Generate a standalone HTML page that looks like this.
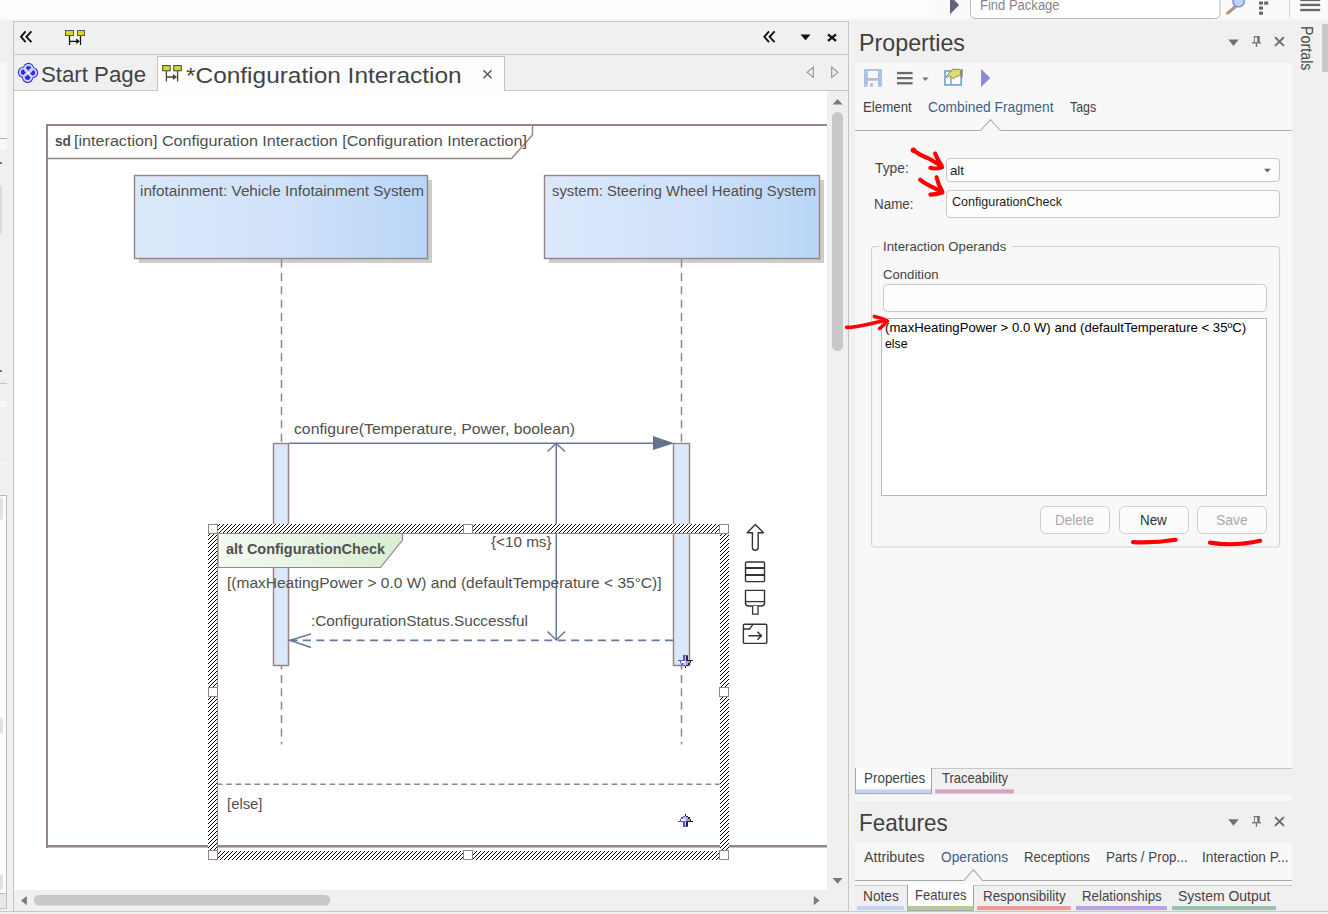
<!DOCTYPE html>
<html><head><meta charset="utf-8"><title>Configuration Interaction</title>
<style>
html,body{margin:0;padding:0}
body{width:1328px;height:914px;overflow:hidden;background:#f0f0f0;position:relative;font-family:"Liberation Sans",sans-serif}
.a{position:absolute}
.t{position:absolute;white-space:nowrap;line-height:1;transform-origin:0 50%;font-family:"Liberation Sans",sans-serif}
svg{position:absolute;left:0;top:0;overflow:visible}
</style></head><body>
<div class="a" style="left:0px;top:0px;width:1328px;height:21px;background:#fdfdfd;background:linear-gradient(#fdfdfd 0,#fdfdfd 17px,#fbfbfb 18px,#f8f8f8 19px,#f5f5f5 20px,#f2f2f2 21px);"></div>
<div class="a" style="left:935px;top:0px;width:393px;height:21px;background:#f9f9f9;background:linear-gradient(#fafafa 0,#fafafa 17px,#f7f7f7 19px,#f2f2f2 21px);"></div>
<div class="a" style="left:0px;top:21px;width:13px;height:893px;background:#f0f0f0;"></div>
<div class="a" style="left:13px;top:21px;width:836px;height:891px;background:#f0f0f0;border-left:1px solid #c4c4c4;border-top:1px solid #c4c4c4;border-right:1px solid #c4c4c4;box-sizing:border-box;"></div>
<div class="a" style="left:14px;top:54px;width:834px;height:1px;background:#c8c8c8;"></div>
<div class="a" style="left:14px;top:90px;width:834px;height:1px;background:#c8c8c8;"></div>
<div class="a" style="left:14px;top:91px;width:813px;height:799px;background:#ffffff;"></div>
<div class="a" style="left:157px;top:56px;width:348px;height:35px;background:#fdfdfd;border:1px solid #c4c4c4;border-bottom:none;box-sizing:border-box;"></div>
<div class="a" style="left:849px;top:21px;width:6px;height:891px;background:#f1f1f1;"></div>
<div class="a" style="left:855px;top:21px;width:437px;height:42px;background:#f0f0f0;"></div>
<div class="a" style="left:855px;top:63px;width:437px;height:705px;background:#f8f8f8;"></div>
<div class="a" style="left:855px;top:768px;width:437px;height:1px;background:#c8c8c8;"></div>
<div class="a" style="left:855px;top:769px;width:437px;height:26px;background:#f0f0f0;"></div>
<div class="a" style="left:855px;top:795px;width:437px;height:6px;background:#f8f8f8;"></div>
<div class="a" style="left:855px;top:801px;width:437px;height:42px;background:#f0f0f0;"></div>
<div class="a" style="left:855px;top:843px;width:437px;height:37px;background:#f8f8f8;"></div>
<div class="a" style="left:855px;top:881px;width:437px;height:4px;background:#f8f8f8;"></div>
<div class="a" style="left:855px;top:885px;width:437px;height:1px;background:#c8c8c8;"></div>
<div class="a" style="left:855px;top:886px;width:437px;height:25px;background:#f0f0f0;"></div>
<div class="a" style="left:0px;top:911px;width:1328px;height:1px;background:#c8c8c8;"></div>
<div class="a" style="left:0px;top:912px;width:1328px;height:2px;background:#f0f0f0;"></div>
<svg width="1328" height="914" viewBox="0 0 1328 914" style="clip-path:inset(91px 501px 24px 14px)">
<defs>
<linearGradient id="gb" x1="0" y1="0" x2="1" y2="0"><stop offset="0" stop-color="#dbe8fb"/><stop offset="0.55" stop-color="#cfe1f9"/><stop offset="1" stop-color="#b9d6f7"/></linearGradient>
<linearGradient id="gg" x1="0" y1="0" x2="1" y2="0"><stop offset="0" stop-color="#f3f9f0"/><stop offset="1" stop-color="#d9eed2"/></linearGradient>
<pattern id="hatch" x="0" y="0" width="4" height="4" patternUnits="userSpaceOnUse" shape-rendering="crispEdges"><rect width="4" height="4" fill="#fff"/><rect x="3" y="0" width="1" height="1" fill="#000"/><rect x="2" y="1" width="1" height="1" fill="#000"/><rect x="1" y="2" width="1" height="1" fill="#000"/><rect x="0" y="3" width="1" height="1" fill="#000"/></pattern>
</defs>
<path d="M47,848 V125 H830" fill="none" stroke="#988484" stroke-width="2"/>
<path d="M46,846.25 H830" fill="none" stroke="#988484" stroke-width="2.5"/>
<path d="M48,158.5 H511.5 L532.5,135 V126" fill="none" stroke="#988484" stroke-width="1.4"/>
<rect x="139.0" y="180" width="293.0" height="83" fill="#cdcdcd"/>
<rect x="134.5" y="175.5" width="293.0" height="83" fill="url(#gb)" stroke="#988484" stroke-width="1.4"/>
<rect x="549.0" y="180" width="275.0" height="83" fill="#cdcdcd"/>
<rect x="544.5" y="175.5" width="275.0" height="83" fill="url(#gb)" stroke="#988484" stroke-width="1.4"/>
<path d="M281.5,259.5 V744.6" stroke="#988484" stroke-width="1.5" stroke-dasharray="8 5.4" fill="none"/>
<path d="M681.5,259.5 V744.6" stroke="#988484" stroke-width="1.5" stroke-dasharray="8 5.4" fill="none"/>
<rect x="273.5" y="443.5" width="15.0" height="222" fill="#dbe8fb" stroke="#988484" stroke-width="1.45"/>
<rect x="673.5" y="443.5" width="16.0" height="222" fill="#dbe8fb" stroke="#988484" stroke-width="1.45"/>
<path d="M289,443.25 H655" stroke="#68779a" stroke-width="1.6" fill="none"/>
<path d="M653,436 L674.2,443.2 L653,450 Z" fill="#65728f"/>
<path d="M556.25,444 V640" stroke="#68779a" stroke-width="1.5" fill="none"/>
<path d="M547.5,451.5 L556.25,443.5 L565,451.5 M547.5,631.5 L556.25,640 L565,631.5" stroke="#68779a" stroke-width="1.5" fill="none"/>
<path d="M673,640.35 H289" stroke="#68779a" stroke-width="1.6" stroke-dasharray="8 5.41" fill="none"/>
<path d="M311,634 L290,640.25 L311,647.5" stroke="#68779a" stroke-width="1.5" fill="none"/>
<path d="M217.5,851 V533.5 H720" fill="none" stroke="#988484" stroke-width="1"/>
<path d="M218,533.5 H402.5 V540 L380.5,567.5 H218 Z" fill="url(#gg)" stroke="#988484" stroke-width="1.2"/>
<path d="M216.8,784.3 H719.5" stroke="#988484" stroke-width="1.5" stroke-dasharray="5.7 3.7" fill="none"/>
<path d="M208,524 H729 V860 H208 Z M217,533 V851 H720 V533 Z" fill="url(#hatch)" fill-rule="evenodd" shape-rendering="crispEdges"/>
<rect x="208.5" y="524.5" width="9" height="9" fill="#fff" stroke="#988484" stroke-width="1"/>
<rect x="463.5" y="524.5" width="9" height="9" fill="#fff" stroke="#988484" stroke-width="1"/>
<rect x="719.5" y="524.5" width="9" height="9" fill="#fff" stroke="#988484" stroke-width="1"/>
<rect x="208.5" y="687.5" width="9" height="9" fill="#fff" stroke="#988484" stroke-width="1"/>
<rect x="719.5" y="687.5" width="9" height="9" fill="#fff" stroke="#988484" stroke-width="1"/>
<rect x="208.5" y="850.5" width="9" height="9" fill="#fff" stroke="#988484" stroke-width="1"/>
<rect x="463.5" y="850.5" width="9" height="9" fill="#fff" stroke="#988484" stroke-width="1"/>
<rect x="719.5" y="850.5" width="9" height="9" fill="#fff" stroke="#988484" stroke-width="1"/>
</svg>
<svg width="1328" height="914" viewBox="0 0 1328 914">
<path d="M950,-4.2 V14.2 L959.2,5 Z" fill="#62627c"/>
<rect x="970.5" y="-6" width="249.5" height="24.5" rx="4.5" fill="#fff" stroke="#b8b8b8" stroke-width="1"/>
<path d="M1235.5,6.2 L1227.3,13.2" stroke="#b89a6a" stroke-width="2.8" stroke-linecap="round"/>
<path d="M1236.3,7.2 L1228.3,14" stroke="#8c7ec8" stroke-width="1" stroke-linecap="round"/>
<circle cx="1238.6" cy="1.2" r="5.6" fill="#c4d4f4" stroke="#7c8ce4" stroke-width="1.5"/>
<rect x="1259" y="1.5" width="4" height="3.2" fill="#6a6a6a"/>
<rect x="1264.2" y="1.5" width="4" height="3.2" fill="#6a6a6a"/>
<rect x="1259" y="6.5" width="4" height="3.2" fill="#6a6a6a"/>
<rect x="1259" y="11.6" width="4" height="3.2" fill="#6a6a6a"/>
<rect x="1289" y="0" width="1" height="18" fill="#d4d4d4"/>
<rect x="1300.2" y="-1.2" width="20" height="2.3" fill="#686868"/>
<rect x="1300.2" y="3.8" width="20" height="2.3" fill="#686868"/>
<rect x="1300.2" y="8.9" width="20" height="2.3" fill="#686868"/>
<path d="M25.6,31.4 L21,36.8 L25.6,42.2 M31.4,31.4 L26.4,36.8 L31.4,42.2" fill="none" stroke="#111" stroke-width="1.9"/>
<g transform="translate(65,30) scale(1.0)"><rect x="0.5" y="0.5" width="8" height="5" fill="#d6d61c" stroke="#5a5a5a" stroke-width="1"/><rect x="12.5" y="0.5" width="7" height="5" fill="#d6d61c" stroke="#5a5a5a" stroke-width="1"/><path d="M4.5,6 V15 M15.5,6 V15 M5,11.3 H13" stroke="#111" stroke-width="1.2" fill="none"/><path d="M11.2,8.6 L14.8,11.3 L11.2,14 Z" fill="#111"/></g>
<g transform="translate(162.1,65)"><rect x="0.55" y="0.55" width="7.5" height="5.2" fill="#d2d642" stroke="#56562e" stroke-width="1.1"/><rect x="11.65" y="0.55" width="7.5" height="5.2" fill="#d2d642" stroke="#56562e" stroke-width="1.1"/><path d="M4.3,6 V16.4 M15.5,6 V16.4 M4.6,12 H12" stroke="#48482e" stroke-width="1.3" fill="none"/><path d="M10.8,9 L15,12 L10.8,15 Z" fill="#48482e"/></g>
<path d="M769,31.4 L764.3,36.8 L769,42.2 M774.6,31.4 L769.6,36.8 L774.6,42.2" fill="none" stroke="#111" stroke-width="1.9"/>
<path d="M800.5,34.5 H810.5 L805.5,40.3 Z" fill="#111"/>
<path d="M828,34.3 L836,40.8 M836,34.3 L828,40.8" stroke="#111" stroke-width="2.3"/>
<path d="M483.5,70.2 L491.5,78.2 M491.5,70.2 L483.5,78.2" stroke="#555" stroke-width="1.5"/>
<path d="M813.3,67.2 V77.4 L807.2,72.3 Z" fill="none" stroke="#909090" stroke-width="1.1"/>
<path d="M831.7,67.2 V77.4 L837.8,72.3 Z" fill="none" stroke="#909090" stroke-width="1.1"/>
<circle cx="28.5" cy="68.3" r="5.5" fill="#2c2ce4"/>
<circle cx="32.7" cy="72.7" r="5.5" fill="#2c2ce4"/>
<circle cx="27.6" cy="77.5" r="5.5" fill="#2c2ce4"/>
<circle cx="23.3" cy="72.3" r="5.5" fill="#2c2ce4"/>
<circle cx="28" cy="72.8" r="5" fill="#2c2ce4"/>
<circle cx="28.5" cy="68.6" r="3.7" fill="none" stroke="#d2d2f9" stroke-width="2"/>
<circle cx="32.4" cy="72.7" r="3.7" fill="none" stroke="#d2d2f9" stroke-width="2"/>
<circle cx="27.6" cy="77.2" r="3.7" fill="none" stroke="#d2d2f9" stroke-width="2"/>
<circle cx="23.6" cy="72.3" r="3.7" fill="none" stroke="#d2d2f9" stroke-width="2"/>
<circle cx="28" cy="72.9" r="1.1" fill="#fff"/>
<path d="M832.6,104.6 H842.6 L837.6,98.9 Z" fill="#7a7a7a"/>
<rect x="832" y="112" width="11" height="239" rx="5.5" fill="#c8c8c8"/>
<path d="M832.6,878 H842.6 L837.6,883.8 Z" fill="#7a7a7a"/>
<path d="M26.8,896 V905.2 L21,900.6 Z" fill="#7a7a7a"/>
<rect x="33.75" y="895" width="296.5" height="10.5" rx="5.25" fill="#c8c8c8"/>
<path d="M813.8,896 V905.2 L819.6,900.6 Z" fill="#7a7a7a"/>
</svg>
<svg width="1328" height="914" viewBox="0 0 1328 914">
<path d="M1228.3,39.4 H1238.7 L1233.5,45.9 Z" fill="#707070"/>
<rect x="1253.6" y="36.099999999999994" width="6.1" height="1.3" fill="#707070"/>
<rect x="1253.9" y="36.099999999999994" width="1.1" height="6.3" fill="#8a8a8a"/>
<rect x="1257.2" y="36.099999999999994" width="2.5" height="6.3" fill="#707070"/>
<rect x="1252" y="42.199999999999996" width="8.9" height="1.3" fill="#707070"/>
<rect x="1255.8" y="43.3" width="1.3" height="3.6" fill="#707070"/>
<path d="M1275.6,37.699999999999996 L1283.4,45.4 M1283.4,37.699999999999996 L1275.6,45.4" stroke="#707070" stroke-width="2" stroke-linecap="round"/>
<path d="M1228.3,819.3000000000001 H1238.7 L1233.5,825.8000000000001 Z" fill="#707070"/>
<rect x="1253.6" y="816.0" width="6.1" height="1.3" fill="#707070"/>
<rect x="1253.9" y="816.0" width="1.1" height="6.3" fill="#8a8a8a"/>
<rect x="1257.2" y="816.0" width="2.5" height="6.3" fill="#707070"/>
<rect x="1252" y="822.1" width="8.9" height="1.3" fill="#707070"/>
<rect x="1255.8" y="823.2" width="1.3" height="3.6" fill="#707070"/>
<path d="M1275.6,817.6 L1283.4,825.3000000000001 M1283.4,817.6 L1275.6,825.3000000000001" stroke="#707070" stroke-width="2" stroke-linecap="round"/>
<path d="M864,69.1 H881.9 V86.7 H878 V80.7 H867.8 V86.7 H864 Z M867.8,71 V78.1 H878 V71 Z" fill="#aac2df" fill-rule="evenodd"/>
<rect x="870.3" y="83.1" width="2.5" height="3.6" fill="#a9b9c6"/>
<rect x="897" y="71.9" width="15.6" height="2.3" fill="#6a6a6a"/>
<rect x="897" y="77.0" width="15.6" height="2.3" fill="#6a6a6a"/>
<rect x="897" y="82.1" width="15.6" height="2.3" fill="#6a6a6a"/>
<path d="M922.4,77.6 H928.4 L925.4,80.9 Z" fill="#707070"/>
<rect x="945" y="71" width="16.2" height="13.9" fill="#fdfdfd" stroke="#6e9ed2" stroke-width="1.6"/>
<path d="M950.9,71 V85" stroke="#6e9ed2" stroke-width="1.4" fill="none"/>
<path d="M946.2,77 L948.5,73.4 L952,70.4 L952.3,69.3 H959.2 L960.6,71 V74.6 L958.4,76.1 L956,76.6 L953.6,79 L951.4,77 L949,75.6 L947.2,77.6 Z" fill="#dcdc6e" stroke="#86863c" stroke-width="0.9" stroke-linejoin="round"/>
<rect x="960.6" y="69" width="2.1" height="8.7" fill="#8a8a8a"/>
<path d="M981.1,69 V87.1 L990.3,77.9 Z" fill="#8a88dc"/>
<path d="M855,130.5 H980.5 L990.5,119.6 L1000.3,130.5 H1292" fill="none" stroke="#b0b0b0" stroke-width="1.1"/>
<path d="M855,880.5 H963.8 L973.4,869.6 L982.6,880.5 H1292" fill="#f8f8f8" stroke="#a8a8a8" stroke-width="1.1"/>
<rect x="946.5" y="158.5" width="333" height="23" rx="3.5" fill="#fdfdfd" stroke="#c6c6c6"/>
<path d="M1264,168.8 H1270.8 L1267.4,172.6 Z" fill="#666"/>
<rect x="946.5" y="190.5" width="333" height="27" rx="3.5" fill="#fdfdfd" stroke="#c6c6c6"/>
<path d="M879.5,246.5 H875 Q871.5,246.5 871.5,250 V543.5 Q871.5,547 875,547 H1276 Q1279.5,547 1279.5,543.5 V250 Q1279.5,246.5 1276,246.5 H1011.5" fill="none" stroke="#d2d2d2" stroke-width="1.1"/>
<rect x="883.5" y="284.5" width="383" height="27" rx="4" fill="#fdfdfd" stroke="#c8c8c8"/>
<rect x="881.5" y="318.5" width="385" height="177" fill="#ffffff" stroke="#b9b9b9"/>
<rect x="1040.5" y="506.5" width="69" height="27" rx="5" fill="#fbfbfb" stroke="#cdcdcd"/>
<rect x="1119.5" y="506.5" width="69" height="27" rx="5" fill="#fbfbfb" stroke="#cdcdcd"/>
<rect x="1197.5" y="506.5" width="69" height="27" rx="5" fill="#fbfbfb" stroke="#cdcdcd"/>
<rect x="856" y="767.6" width="75" height="26" fill="#fdfdfd"/>
<path d="M855.5,768 V793.5 H931.5 V768" fill="none" stroke="#a6a6a6"/>
<rect x="856" y="789.4" width="75" height="3.8" fill="#c3d3f1"/>
<rect x="935.2" y="789.4" width="78.6" height="4" fill="#d5a3bf"/>
<rect x="857.2" y="906" width="46.8" height="4.2" fill="#c3d3f1"/>
<rect x="908" y="884.6" width="65" height="26" fill="#fdfdfd"/>
<path d="M907.5,885 V910.5 H973.5 V885" fill="none" stroke="#a6a6a6"/>
<rect x="908" y="906" width="65" height="4.2" fill="#b5c99c"/>
<rect x="977" y="906" width="93.8" height="4.2" fill="#f09a9a"/>
<rect x="1076" y="906" width="91" height="4.2" fill="#b8a2e2"/>
<rect x="1172" y="906" width="104" height="4.2" fill="#99c2b2"/>
<rect x="1322" y="24" width="6" height="48" fill="#c8c8c8"/>
<circle cx="913.4" cy="150.2" r="2.7" fill="#fe0000"/>
<path d="M913.4,150.2 C917,152.6 919,154 921.2,155.2 C924,156.6 927,157.6 929.6,159 C934,161.4 938,164 941.6,166.6 M935.2,153.6 C936.4,157 938.4,160.4 941.8,166.4 M930.4,167.8 C934,169 938,168.6 942,167.2" fill="none" stroke="#fe0000" stroke-width="4.2" stroke-linecap="round" stroke-linejoin="round"/>
<path d="M920.2,179.8 C923,182.4 926,184 929.4,185.6 C934,187.8 938,189.8 942.2,192 M936.6,177.4 C937.6,182 939.6,187 942.4,191.8 M930.4,194.6 C934.4,194.6 938.6,193.6 942.4,192.4" fill="none" stroke="#fe0000" stroke-width="4.2" stroke-linecap="round" stroke-linejoin="round"/>
<path d="M846.6,327.4 C856,327.6 868,324 884.6,320.6 M874.4,316.6 C880,317.6 884,319 887.4,321 C885,324 882.6,326.4 879.6,328.4" fill="none" stroke="#fe0000" stroke-width="3.6" stroke-linecap="round" stroke-linejoin="round"/>
<path d="M1133,542.2 C1147,542.8 1162,542 1175.6,539.8" fill="none" stroke="#fe0000" stroke-width="4.2" stroke-linecap="round"/>
<path d="M1210,542.6 C1224,545 1243,544.6 1260.2,540.8" fill="none" stroke="#fe0000" stroke-width="4.2" stroke-linecap="round"/>
</svg>
<svg width="1328" height="914" viewBox="0 0 1328 914">
<path d="M755.3,524.6 L763.5,532.7 H758.2 V547.6 Q758.2,550.3 755.3,550.3 Q752.4,550.3 752.4,547.6 V532.7 H747.2 Z" fill="#fff" stroke="#333" stroke-width="1.4" stroke-linejoin="round"/>
<rect x="745.5" y="562" width="19" height="19.6" rx="1.2" fill="#fff" stroke="#333" stroke-width="1.4"/>
<path d="M745.5,568 H764.5 M745.5,575 H764.5" stroke="#333" stroke-width="2"/>
<path d="M745.5,590.4 H764.5 V603 Q764.5,606 761.5,606 H748.5 Q745.5,606 745.5,603 Z" fill="#fff" stroke="#333" stroke-width="1.4" stroke-linejoin="round"/>
<path d="M745.5,601.6 H764.5" stroke="#333" stroke-width="1.3"/>
<path d="M752.6,606 V614.2 H758 V606" fill="#fff" stroke="#333" stroke-width="1.3"/>
<rect x="743.4" y="624.2" width="23.4" height="19.2" rx="1" fill="#fff" stroke="#333" stroke-width="1.4"/>
<path d="M743.4,629 H749.6 L753.2,624.2" fill="none" stroke="#333" stroke-width="1.3"/>
<path d="M748.4,635.8 H761 M757.4,631.8 L761.4,635.8 L757.4,639.8" fill="none" stroke="#333" stroke-width="1.5"/>
<g shape-rendering="crispEdges"><rect x="683" y="655" width="5" height="1" fill="#5454d4"/><rect x="683" y="656" width="2" height="1" fill="#5454d4"/><rect x="685" y="656" width="1" height="1" fill="#a8d0f4"/><rect x="686" y="656" width="2" height="1" fill="#262626"/><rect x="683" y="657" width="2" height="1" fill="#5454d4"/><rect x="685" y="657" width="1" height="1" fill="#a8d0f4"/><rect x="686" y="657" width="2" height="1" fill="#262626"/><rect x="683" y="658" width="2" height="1" fill="#5454d4"/><rect x="685" y="658" width="1" height="1" fill="#a8d0f4"/><rect x="686" y="658" width="2" height="1" fill="#262626"/><rect x="683" y="659" width="2" height="1" fill="#5454d4"/><rect x="685" y="659" width="1" height="1" fill="#a8d0f4"/><rect x="686" y="659" width="2" height="1" fill="#262626"/><rect x="678" y="660" width="7" height="1" fill="#5454d4"/><rect x="685" y="660" width="1" height="1" fill="#a8d0f4"/><rect x="686" y="660" width="7" height="1" fill="#262626"/><rect x="680" y="661" width="1" height="1" fill="#5454d4"/><rect x="681" y="661" width="4" height="1" fill="#ffffff"/><rect x="685" y="661" width="1" height="1" fill="#a8d0f4"/><rect x="686" y="661" width="4" height="1" fill="#a8a0e4"/><rect x="690" y="661" width="1" height="1" fill="#262626"/><rect x="680" y="662" width="1" height="1" fill="#5454d4"/><rect x="681" y="662" width="4" height="1" fill="#ffffff"/><rect x="685" y="662" width="1" height="1" fill="#a8d0f4"/><rect x="686" y="662" width="4" height="1" fill="#a8a0e4"/><rect x="690" y="662" width="1" height="1" fill="#262626"/><rect x="681" y="663" width="2" height="1" fill="#5454d4"/><rect x="683" y="663" width="3" height="1" fill="#a8d0f4"/><rect x="686" y="663" width="2" height="1" fill="#a8a0e4"/><rect x="688" y="663" width="2" height="1" fill="#262626"/><rect x="681" y="664" width="2" height="1" fill="#5454d4"/><rect x="683" y="664" width="3" height="1" fill="#a8d0f4"/><rect x="686" y="664" width="2" height="1" fill="#a8a0e4"/><rect x="688" y="664" width="2" height="1" fill="#262626"/><rect x="683" y="665" width="2" height="1" fill="#5454d4"/><rect x="685" y="665" width="1" height="1" fill="#a8d0f4"/><rect x="686" y="665" width="2" height="1" fill="#262626"/><rect x="685" y="666" width="1" height="1" fill="#111"/><rect x="685" y="667" width="1" height="1" fill="#111"/></g>
<g shape-rendering="crispEdges"><rect x="683" y="826" width="5" height="1" fill="#5454d4"/><rect x="683" y="825" width="2" height="1" fill="#5454d4"/><rect x="685" y="825" width="1" height="1" fill="#a8d0f4"/><rect x="686" y="825" width="2" height="1" fill="#262626"/><rect x="683" y="824" width="2" height="1" fill="#5454d4"/><rect x="685" y="824" width="1" height="1" fill="#a8d0f4"/><rect x="686" y="824" width="2" height="1" fill="#262626"/><rect x="683" y="823" width="2" height="1" fill="#5454d4"/><rect x="685" y="823" width="1" height="1" fill="#a8d0f4"/><rect x="686" y="823" width="2" height="1" fill="#262626"/><rect x="683" y="822" width="2" height="1" fill="#5454d4"/><rect x="685" y="822" width="1" height="1" fill="#a8d0f4"/><rect x="686" y="822" width="2" height="1" fill="#262626"/><rect x="678" y="821" width="7" height="1" fill="#5454d4"/><rect x="685" y="821" width="1" height="1" fill="#a8d0f4"/><rect x="686" y="821" width="7" height="1" fill="#262626"/><rect x="680" y="820" width="1" height="1" fill="#5454d4"/><rect x="681" y="820" width="4" height="1" fill="#ffffff"/><rect x="685" y="820" width="1" height="1" fill="#a8d0f4"/><rect x="686" y="820" width="4" height="1" fill="#a8a0e4"/><rect x="690" y="820" width="1" height="1" fill="#262626"/><rect x="680" y="819" width="1" height="1" fill="#5454d4"/><rect x="681" y="819" width="4" height="1" fill="#ffffff"/><rect x="685" y="819" width="1" height="1" fill="#a8d0f4"/><rect x="686" y="819" width="4" height="1" fill="#a8a0e4"/><rect x="690" y="819" width="1" height="1" fill="#262626"/><rect x="681" y="818" width="2" height="1" fill="#5454d4"/><rect x="683" y="818" width="3" height="1" fill="#a8d0f4"/><rect x="686" y="818" width="2" height="1" fill="#a8a0e4"/><rect x="688" y="818" width="2" height="1" fill="#262626"/><rect x="681" y="817" width="2" height="1" fill="#5454d4"/><rect x="683" y="817" width="3" height="1" fill="#a8d0f4"/><rect x="686" y="817" width="2" height="1" fill="#a8a0e4"/><rect x="688" y="817" width="2" height="1" fill="#262626"/><rect x="683" y="816" width="2" height="1" fill="#5454d4"/><rect x="685" y="816" width="1" height="1" fill="#a8d0f4"/><rect x="686" y="816" width="2" height="1" fill="#262626"/><rect x="685" y="815" width="1" height="1" fill="#111"/><rect x="685" y="814" width="1" height="1" fill="#111"/></g>
</svg>
<div class="a" style="left:0px;top:63px;width:7px;height:87px;background:#f8f8f8;"></div>
<div class="a" style="left:0px;top:138px;width:7px;height:1px;background:#b4b4b4;"></div>
<div class="a" style="left:0px;top:185px;width:2px;height:49px;background:#dadada;border-radius:0 2px 2px 0;"></div>
<div class="a" style="left:0px;top:383px;width:7px;height:1px;background:#c4c4c4;"></div>
<div class="a" style="left:0px;top:162px;width:2px;height:2px;background:#777;"></div>
<div class="a" style="left:0px;top:370px;width:2px;height:2px;background:#777;"></div>
<div class="a" style="left:0px;top:401px;width:7px;height:6px;background:#f8f8f8;"></div>
<div class="a" style="left:0px;top:463px;width:7px;height:1px;background:#f8f8f8;"></div>
<div class="a" style="left:0px;top:495px;width:7px;height:398px;background:#fcfcfc;border-top:1px solid #bcbcbc;border-right:1px solid #bcbcbc;box-sizing:border-box;"></div>
<div class="a" style="left:0px;top:497px;width:3px;height:23px;background:#e2e2e2;border-radius:0 3px 3px 0;"></div>
<div class="a" style="left:0px;top:718px;width:3px;height:16px;background:#e2e2e2;border-radius:0 3px 3px 0;"></div>
<div class="a" style="left:0px;top:874px;width:3px;height:16px;background:#e2e2e2;border-radius:0 3px 3px 0;"></div>
<div class="a" style="left:0px;top:893px;width:7px;height:16px;background:#e8e8e8;border:1px solid #c0c0c0;border-left:none;box-sizing:border-box;"></div>
<span class="t" id="t0" style="left:55.20px;top:133.16px;font-size:15.4px;color:#505050;font-weight:bold;transform:scaleX(0.8904);">sd</span>
<span class="t" id="t1" style="left:73.50px;top:133.16px;font-size:15.4px;color:#505050;font-weight:normal;transform:scaleX(1.0485);">[interaction] Configuration Interaction [Configuration Interaction]</span>
<span class="t" id="t2" style="left:140.00px;top:183.16px;font-size:15.4px;color:#505050;font-weight:normal;transform:scaleX(0.9909);">infotainment: Vehicle Infotainment System</span>
<span class="t" id="t3" style="left:551.50px;top:183.16px;font-size:15.4px;color:#505050;font-weight:normal;transform:scaleX(0.9585);">system: Steering Wheel Heating System</span>
<span class="t" id="t4" style="left:293.60px;top:421.16px;font-size:15.4px;color:#505050;font-weight:normal;transform:scaleX(1.0232);">configure(Temperature, Power, boolean)</span>
<span class="t" id="t5" style="left:226.25px;top:540.71px;font-size:15.4px;color:#505050;font-weight:bold;transform:scaleX(0.9391);">alt ConfigurationCheck</span>
<span class="t" id="t6" style="left:490.75px;top:534.16px;font-size:15.4px;color:#505050;font-weight:normal;transform:scaleX(0.9888);">{&lt;10 ms}</span>
<span class="t" id="t7" style="left:227.00px;top:575.16px;font-size:15.4px;color:#505050;font-weight:normal;transform:scaleX(1.0074);">[(maxHeatingPower &gt; 0.0 W) and (defaultTemperature &lt; 35°C)]</span>
<span class="t" id="t8" style="left:311.25px;top:612.66px;font-size:15.4px;color:#505050;font-weight:normal;transform:scaleX(0.9947);">:ConfigurationStatus.Successful</span>
<span class="t" id="t9" style="left:227.00px;top:795.86px;font-size:15.4px;color:#505050;font-weight:normal;transform:scaleX(0.9648);">[else]</span>
<span class="t" id="t10" style="left:980.00px;top:-1.67px;font-size:14.5px;color:#868686;font-weight:normal;transform:scaleX(0.8977);">Find Package</span>
<span class="t" id="t11" style="left:41.30px;top:63.61px;font-size:22.2px;color:#444444;font-weight:normal;transform:scaleX(1.0015);">Start Page</span>
<span class="t" id="t12" style="left:186.00px;top:64.61px;font-size:22.2px;color:#444444;font-weight:normal;transform:scaleX(1.1011);">*Configuration Interaction</span>
<span class="t" id="t13" style="left:858.80px;top:32.06px;font-size:23.2px;color:#404040;font-weight:normal;transform:scaleX(1.0030);">Properties</span>
<span class="t" id="t14" style="left:859.20px;top:812.06px;font-size:23.2px;color:#404040;font-weight:normal;transform:scaleX(0.9692);">Features</span>
<span class="t" id="t15" style="left:863.00px;top:101.23px;font-size:13.9px;color:#444444;font-weight:normal;transform:scaleX(0.9565);">Element</span>
<span class="t" id="t16" style="left:928.25px;top:101.23px;font-size:13.9px;color:#3c5f8c;font-weight:normal;transform:scaleX(0.9911);">Combined Fragment</span>
<span class="t" id="t17" style="left:1070.00px;top:101.23px;font-size:13.9px;color:#444444;font-weight:normal;transform:scaleX(0.8946);">Tags</span>
<span class="t" id="t18" style="left:875.00px;top:161.15px;font-size:14px;color:#444444;font-weight:normal;transform:scaleX(0.9854);">Type:</span>
<span class="t" id="t19" style="left:874.25px;top:196.65px;font-size:14px;color:#444444;font-weight:normal;transform:scaleX(0.9579);">Name:</span>
<span class="t" id="t20" style="left:950.00px;top:164.04px;font-size:13.3px;color:#222;font-weight:normal;transform:scaleX(0.9967);">alt</span>
<span class="t" id="t21" style="left:951.60px;top:194.74px;font-size:13.3px;color:#222;font-weight:normal;transform:scaleX(0.9418);">ConfigurationCheck</span>
<span class="t" id="t22" style="left:883.30px;top:240.49px;font-size:13.6px;color:#444444;font-weight:normal;transform:scaleX(0.9712);">Interaction Operands</span>
<span class="t" id="t23" style="left:883.30px;top:267.99px;font-size:13.6px;color:#444444;font-weight:normal;transform:scaleX(0.9663);">Condition</span>
<span class="t" id="t24" style="left:884.60px;top:320.74px;font-size:13.3px;color:#000;font-weight:normal;transform:scaleX(0.9902);">(maxHeatingPower &gt; 0.0 W) and (defaultTemperature &lt; 35ºC)</span>
<span class="t" id="t25" style="left:884.60px;top:337.04px;font-size:13.3px;color:#000;font-weight:normal;transform:scaleX(0.9260);">else</span>
<span class="t" id="t26" style="left:1055.40px;top:513.15px;font-size:14px;color:#a9a9a9;font-weight:normal;transform:scaleX(0.9637);">Delete</span>
<span class="t" id="t27" style="left:1140.20px;top:513.15px;font-size:14px;color:#333;font-weight:normal;transform:scaleX(0.9566);">New</span>
<span class="t" id="t28" style="left:1216.00px;top:513.15px;font-size:14px;color:#a9a9a9;font-weight:normal;transform:scaleX(0.9930);">Save</span>
<span class="t" id="t29" style="left:863.50px;top:771.93px;font-size:13.9px;color:#444444;font-weight:normal;transform:scaleX(0.9666);">Properties</span>
<span class="t" id="t30" style="left:941.70px;top:772.43px;font-size:13.9px;color:#444444;font-weight:normal;transform:scaleX(0.9374);">Traceability</span>
<span class="t" id="t31" style="left:863.50px;top:851.23px;font-size:13.9px;color:#444444;font-weight:normal;transform:scaleX(1.0275);">Attributes</span>
<span class="t" id="t32" style="left:940.70px;top:851.23px;font-size:13.9px;color:#3c5f8c;font-weight:normal;transform:scaleX(0.9874);">Operations</span>
<span class="t" id="t33" style="left:1024.10px;top:851.23px;font-size:13.9px;color:#444444;font-weight:normal;transform:scaleX(0.9482);">Receptions</span>
<span class="t" id="t34" style="left:1106.20px;top:851.23px;font-size:13.9px;color:#444444;font-weight:normal;transform:scaleX(0.9609);">Parts / Prop...</span>
<span class="t" id="t35" style="left:1202.20px;top:851.23px;font-size:13.9px;color:#444444;font-weight:normal;transform:scaleX(0.9865);">Interaction P...</span>
<span class="t" id="t36" style="left:863.20px;top:889.63px;font-size:13.9px;color:#444444;font-weight:normal;transform:scaleX(0.9863);">Notes</span>
<span class="t" id="t37" style="left:915.30px;top:889.13px;font-size:13.9px;color:#444444;font-weight:normal;transform:scaleX(0.9375);">Features</span>
<span class="t" id="t38" style="left:983.30px;top:889.63px;font-size:13.9px;color:#444444;font-weight:normal;transform:scaleX(0.9638);">Responsibility</span>
<span class="t" id="t39" style="left:1082.10px;top:889.63px;font-size:13.9px;color:#444444;font-weight:normal;transform:scaleX(0.9556);">Relationships</span>
<span class="t" id="t40" style="left:1178.30px;top:889.63px;font-size:13.9px;color:#444444;font-weight:normal;transform:scaleX(1.0046);">System Output</span>
<span class="t" id="t41" style="left:1314.34px;top:26.20px;font-size:16px;color:#484848;font-weight:normal;transform-origin:0 0;transform:rotate(90deg) scaleX(0.8936);">Portals</span>
</body></html>
